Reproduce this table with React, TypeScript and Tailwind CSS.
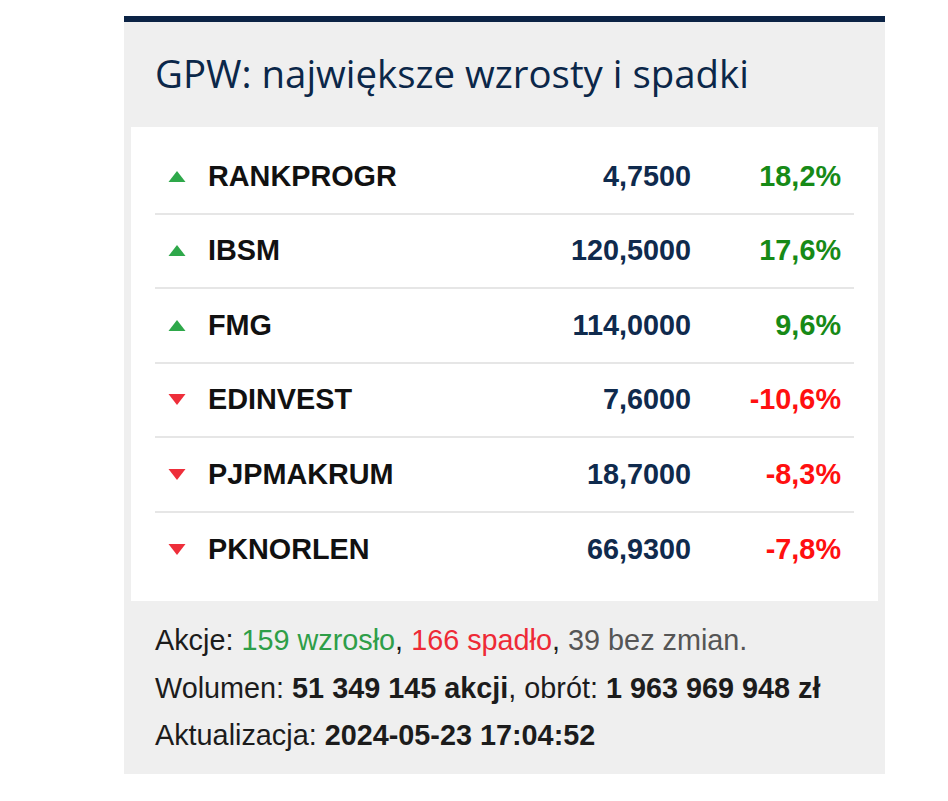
type Mover = {
  name: string;
  price: string;
  change: string;
  up: boolean;
};

const movers: Mover[] = [
  { name: "RANKPROGR", price: "4,7500", change: "18,2%", up: true },
  { name: "IBSM", price: "120,5000", change: "17,6%", up: true },
  { name: "FMG", price: "114,0000", change: "9,6%", up: true },
  { name: "EDINVEST", price: "7,6000", change: "-10,6%", up: false },
  { name: "PJPMAKRUM", price: "18,7000", change: "-8,3%", up: false },
  { name: "PKNORLEN", price: "66,9300", change: "-7,8%", up: false },
];

const Arrow = ({ up }: { up: boolean }) => (
  <svg width="18" height="13" viewBox="0 0 18 13" className="shrink-0">
    {up ? (
      <polygon points="9,1 17.5,12 0.5,12" fill="#2ea84a" />
    ) : (
      <polygon points="0.5,1 17.5,1 9,12" fill="#ee2e3a" />
    )}
  </svg>
);

const MoverRow = ({ item, last }: { item: Mover; last: boolean }) => (
  <div
    className={`flex h-[74.5px] items-center ${last ? "" : "border-b-2 border-[#e6e6e6]"}`}
  >
    <div className="flex w-[53px] justify-end pr-[22px]">
      <Arrow up={item.up} />
    </div>
    <span className="flex-1 font-bold text-[#111111]">{item.name}</span>
    <span className="w-[200px] text-right font-bold text-[#0f2a4d]">{item.price}</span>
    <span
      className={`w-[150px] text-right font-bold ${item.up ? "text-[#178a17]" : "text-[#ff1010]"}`}
    >
      {item.change}
    </span>
    <div className="w-[13px]" />
  </div>
);

export default function App() {
  return (
    <div className="min-h-[801px] bg-white pl-[124px] pt-[16px]">
      <div className="w-[761px] border-t-[6px] border-[#0b2345] bg-[#efefef] pb-[14px]">
        <h2
          className="h-[105px] pl-[31px] pt-[31px] text-[38.4px] font-medium leading-[40px] text-[#0b2749]"
          style={{ fontFamily: '"Open Sans", "Noto Sans", sans-serif' }}
        >
          GPW: największe wzrosty i spadki
        </h2>
        <div
          className="mx-[7px] bg-white px-[24px] pb-[14px] pt-[13px] text-[28.8px]"
          style={{ fontFamily: '"Liberation Sans", Arial, sans-serif' }}
        >
          {movers.map((m, i) => (
            <MoverRow key={m.name} item={m} last={i === movers.length - 1} />
          ))}
        </div>
        <div
          className="px-[31px] pt-[16px] text-[28.8px] leading-[47.5px] text-[#1c1c1c]"
          style={{ fontFamily: '"Liberation Sans", Arial, sans-serif' }}
        >
          <p>
            Akcje: <span className="text-[#2e9e48]">159 wzrosło</span>,{" "}
            <span className="text-[#ee2a36]">166 spadło</span>,{" "}
            <span className="text-[#555555]">39 bez zmian.</span>
          </p>
          <p>
            Wolumen: <b>51 349 145 akcji</b>, obrót: <b>1 963 969 948 zł</b>
          </p>
          <p>
            Aktualizacja: <b>2024-05-23 17:04:52</b>
          </p>
        </div>
      </div>
    </div>
  );
}
